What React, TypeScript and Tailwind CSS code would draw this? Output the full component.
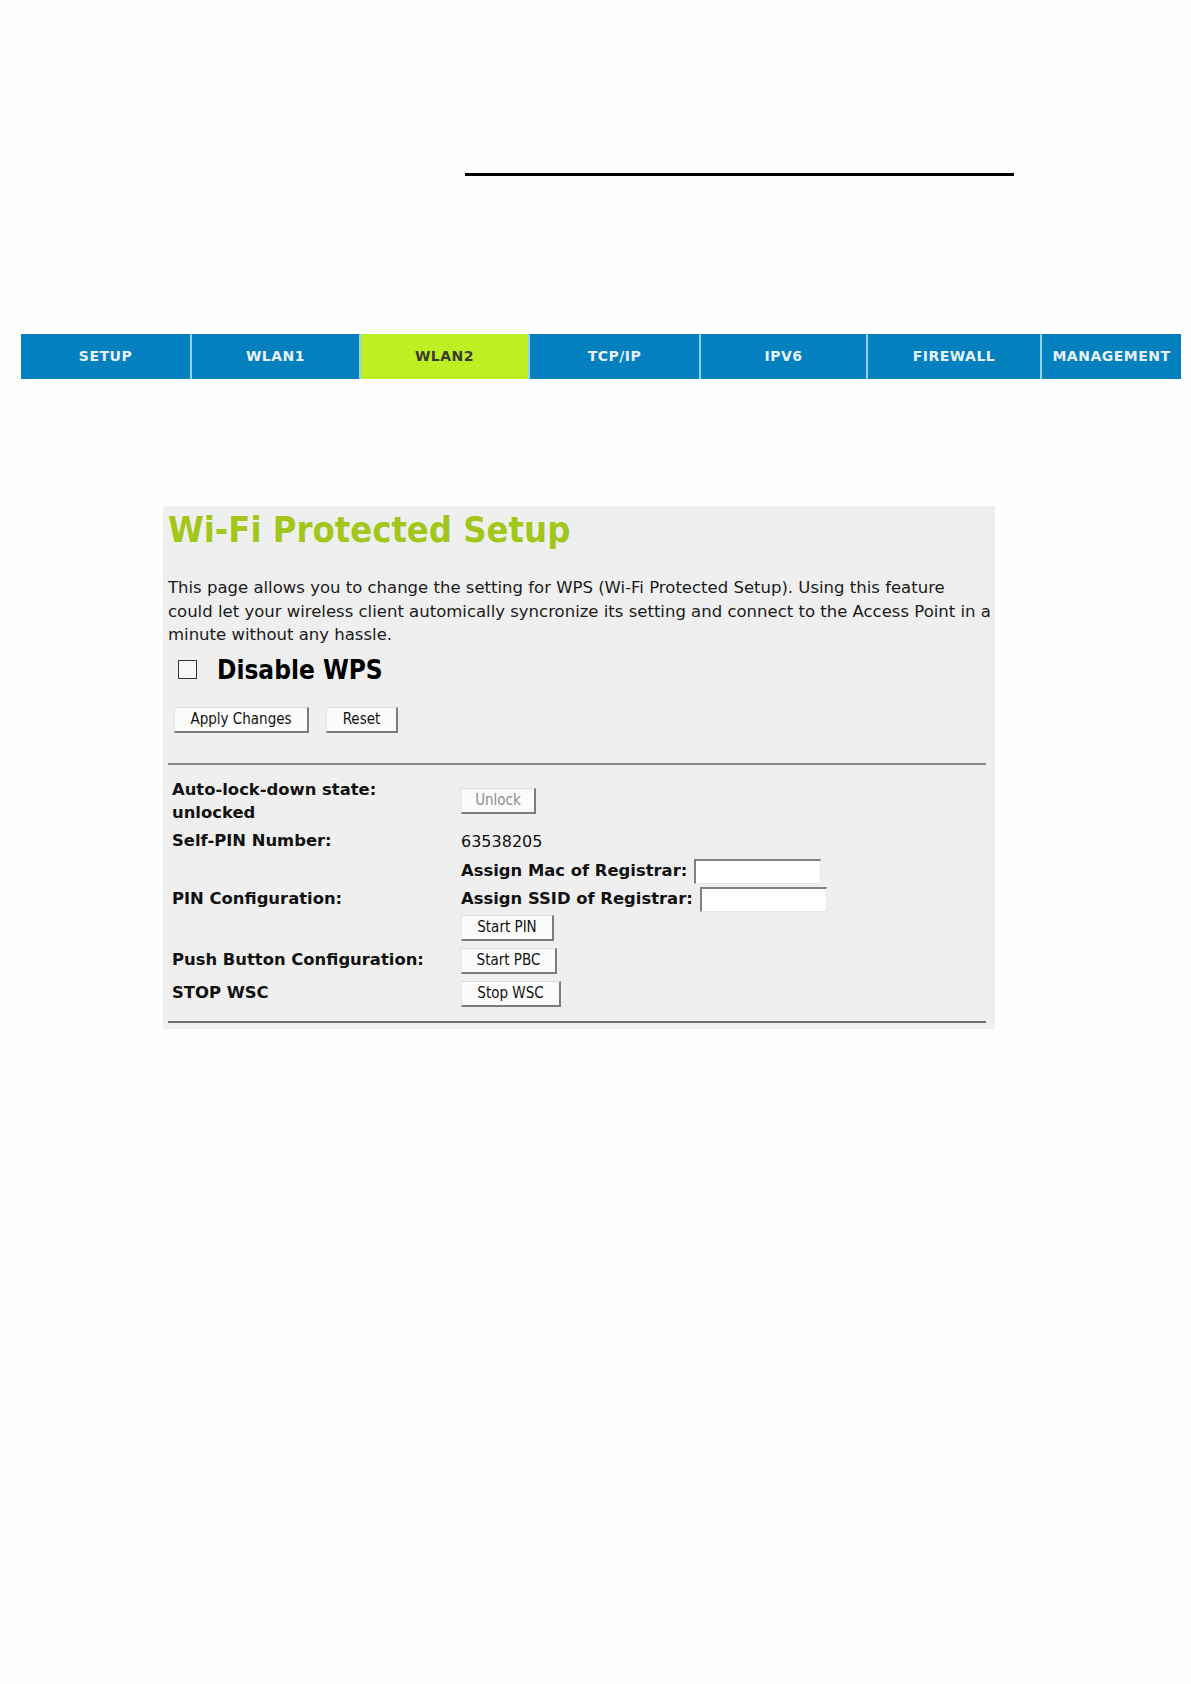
const tabs = [
  { label: "SETUP", w: "w-[169px]" },
  { label: "WLAN1", w: "w-[169px]" },
  { label: "WLAN2", w: "w-[169px]", active: true },
  { label: "TCP/IP", w: "w-[171px]" },
  { label: "IPV6", w: "w-[167px]" },
  { label: "FIREWALL", w: "w-[174px]" },
  { label: "MANAGEMENT", w: "w-[141px]" },
];

const cond = { fontFamily: "'DejaVu Sans Condensed', 'DejaVu Sans', sans-serif" };
const wide = { fontFamily: "'DejaVu Sans', sans-serif" };

function Btn({ children, disabled, w }: { children: string; disabled?: boolean; w: string }) {
  return (
    <button
      className={`${w} h-[26px] bg-[#fbfbfb] border-t border-l border-t-[#dcdcdc] border-l-[#e6e6e6] border-r-2 border-b-2 border-r-[#7c7c7c] border-b-[#7c7c7c] text-[15px] font-normal leading-none flex items-center justify-center ${
        disabled ? "text-[#8c8c8c]" : "text-[#111]"
      }`}
      style={cond}
    >
      {children}
    </button>
  );
}

function Field() {
  return (
    <div className="w-[127px] h-[25px] bg-white border-t-2 border-l-2 border-t-[#808080] border-l-[#808080] border-r border-b border-r-[#e8e8e8] border-b-[#e8e8e8]" />
  );
}

export default function App() {
  return (
    <div className="min-h-[1684px] w-[1191px] bg-[#fefefe] pt-[173px]" style={cond}>
      <div className="ml-[465px] w-[549px] h-[3px] bg-black" />

      {/* nav */}
      <div className="mt-[158px] ml-[21px] flex h-[45px]">
        {tabs.map((t, i) => (
          <div
            key={t.label}
            className={`${t.w} h-full flex items-center justify-center text-[14px] font-bold tracking-[0.5px] ${
              i > 0 ? "border-l-2 border-l-[#8fd3f2]" : ""
            } ${t.active ? "bg-[#bdf023] text-[#3a3a2a]" : "bg-[#0580bf] text-[#e9f1f8]"}`}
            style={wide}
          >
            {t.label}
          </div>
        ))}
      </div>

      {/* panel */}
      <div className="mt-[127px] ml-[163px] w-[832px] h-[523px] bg-[#efefef] pl-[5px] pr-[9px] pt-[2px] text-[#111]">
        <h1 className="text-[36px] leading-[44px] font-bold text-[#a3c61a]">Wi-Fi Protected Setup</h1>

        <p className="mt-[24px] text-[16.5px] leading-[23.5px] whitespace-nowrap text-[#1a1a1a]" style={wide}>
          This page allows you to change the setting for WPS (Wi-Fi Protected Setup). Using this feature
          <br />
          could let your wireless client automically syncronize its setting and connect to the Access Point in a
          <br />
          minute without any hassle.
        </p>

        <div className="mt-[8px] h-[30px] flex items-center">
          <div className="ml-[10px] w-[19px] h-[19px] border-[1.5px] border-[#333] bg-[#f7f7f7]" />
          <span className="ml-[20px] text-[26px] font-bold leading-none text-black">Disable WPS</span>
        </div>

        <div className="mt-[22px] ml-[6px] flex gap-[17px]">
          <Btn w="w-[135px]">Apply Changes</Btn>
          <Btn w="w-[72px]">Reset</Btn>
        </div>

        <div className="mt-[30px] h-[2px] bg-[#8a8a8a]" />

        <div className="mt-[12px] pl-[4px] flex flex-col text-[16.4px] font-bold" style={wide}>
          <div className="h-[48px] flex items-center">
            <div className="w-[289px] leading-[23px]">
              Auto-lock-down state:
              <br />
              unlocked
            </div>
            <Btn w="w-[75px]" disabled>
              Unlock
            </Btn>
          </div>

          <div className="mt-[4px] h-[26px] flex items-center">
            <div className="w-[289px]">Self-PIN Number:</div>
            <span className="font-normal text-[16px]">63538205</span>
          </div>

          <div className="mt-[4px] h-[82px] flex items-center">
            <div className="w-[289px]">PIN Configuration:</div>
            <div className="flex flex-col gap-[1px]">
              <div className="h-[27px] flex items-center gap-[7px]">
                <span>Assign Mac of Registrar:</span>
                <Field />
              </div>
              <div className="h-[27px] flex items-center gap-[7px]">
                <span>Assign SSID of Registrar:</span>
                <Field />
              </div>
              <div className="h-[27px] flex items-center">
                <Btn w="w-[93px]">Start PIN</Btn>
              </div>
            </div>
          </div>

          <div className="mt-[6px] h-[28px] flex items-center">
            <div className="w-[289px]">Push Button Configuration:</div>
            <Btn w="w-[96px]">Start PBC</Btn>
          </div>

          <div className="mt-[6px] h-[26px] flex items-center">
            <div className="w-[289px]">STOP WSC</div>
            <Btn w="w-[100px]">Stop WSC</Btn>
          </div>
        </div>

        <div className="mt-[14px] h-[2px] bg-[#6e6e6e]" />
      </div>
    </div>
  );
}
